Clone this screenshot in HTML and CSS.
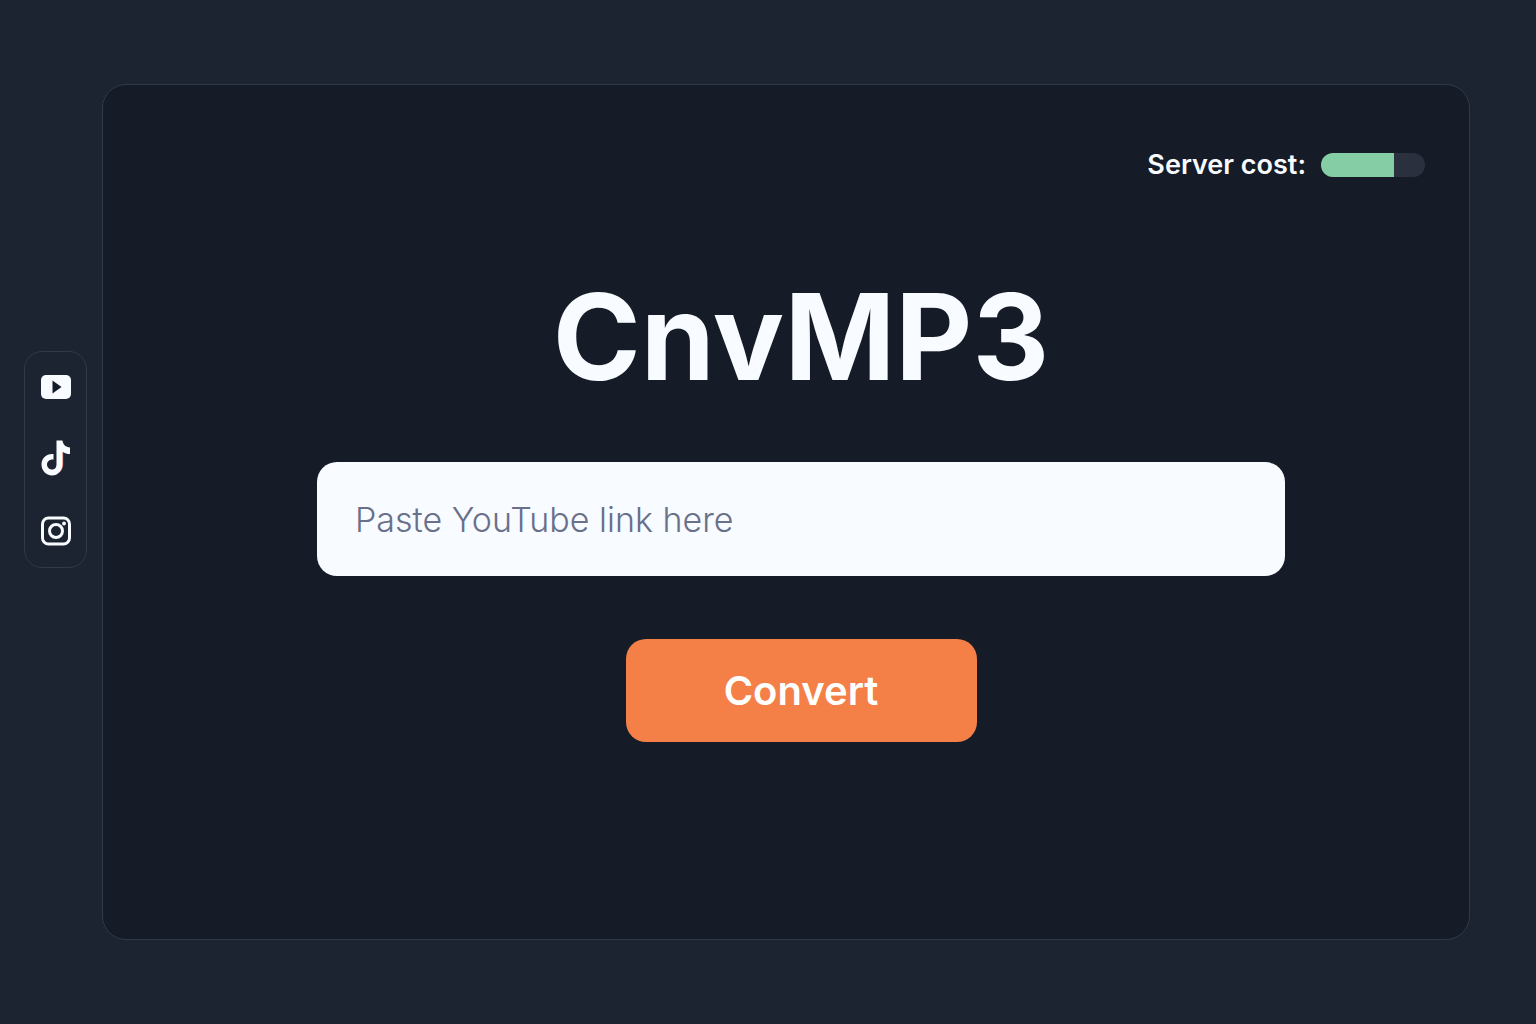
FILE: index.html
```html
<!DOCTYPE html>
<html lang="en">
<head>
    <meta charset="UTF-8">
    <meta name="viewport" content="width=device-width, initial-scale=1.0">
    <title>CnvMP3</title>
    <link rel="stylesheet" href="styles.css">
</head>

<body>

    <nav class="sidebar" aria-label="Platforms">
        <a href="#youtube" aria-label="YouTube">
            <svg class="icon" viewBox="0 0 36 36">
                <rect x="3" y="6" width="30" height="24" rx="5" fill="#f8fbff"/>
                <path d="M14.500 11.500v13l9-6.500z" fill="#151c28"/>
            </svg>
        </a>
        <a href="#tiktok" aria-label="TikTok">
            <svg class="icon" viewBox="0 0 36 36">
                <path d="M24 10h1.200v13.500c0 3-1.200 5.500-3.200 7.500z" fill="#d9643f"/>
                <path d="M18.500 -.5h6c.4 4.300 3.300 6.500 7.500 6.900v6.600c-2.800 0-5.300-.8-7.500-2.300v12.500C24.500 29.300 20 34.500 14 34.500S3.500 29.400 3.500 23.500 8.200 13 14 13l1.500.1v5.400c-3.300-.7-6.500 1.700-6.500 5 0 2.800 2.200 5 5 5 2.900 0 4.500-2.100 4.500-5.100z" fill="#f8fbff"/>
            </svg>
        </a>
        <a href="#instagram" aria-label="Instagram">
            <svg class="icon" viewBox="0 0 36 36" fill="none" stroke="#f8fbff" stroke-width="3">
                <rect x="4.500" y="5" width="27" height="26" rx="6"/>
                <circle cx="18" cy="18" r="6.500"/>
                <circle cx="26" cy="10.500" r="1.900" fill="#f8fbff" stroke="none"/>
            </svg>
        </a>
    </nav>

    <main class="panel">
        <div class="server-cost">
            <label for="serverCost">Server cost:</label>
            <progress id="serverCost" value="70" max="100"></progress>
        </div>

        <h1>CnvMP3</h1>

        <form class="convert-form">
            <input type="text" id="link" name="link" placeholder="Paste YouTube link here" aria-label="Paste YouTube link here">
            <button type="submit">Convert</button>
        </form>
    </main>

</body>
</html>
```

FILE: styles.css
```css
* {
    box-sizing: border-box;
}

body {
    font-family: Inter, 'Liberation Sans', sans-serif;
    background-color: #1d2431;
    color: #f8fbff;
    margin: 0;
    min-height: 100vh;
    padding: 84px 66px 84px 24px;
    display: flex;
    gap: 15px;
}

.sidebar {
    width: 63px;
    margin-top: 267px;
    padding: 17px 0 18px;
    border: 1px solid #323946;
    border-radius: 18px;
    display: flex;
    flex-direction: column;
    align-items: center;
    align-self: flex-start;
    gap: 36px;
}

.sidebar a {
    display: block;
    height: 36px;
}

.icon {
    display: block;
    width: 36px;
    height: 36px;
    overflow: visible;
}

.panel {
    flex: 1;
    padding: 60px 44px 60px 74px;
    background-color: #151c28;
    border: 1px solid #323946;
    border-radius: 24px;
    display: flex;
    flex-direction: column;
    align-items: center;
}

.server-cost {
    align-self: flex-end;
    display: flex;
    align-items: center;
    gap: 15px;
    font-size: 27px;
    font-weight: 600;
    line-height: 40px;
}

progress {
    appearance: none;
    width: 104px;
    height: 24px;
    border: none;
    border-radius: 12px;
    overflow: hidden;
}

progress::-webkit-progress-bar {
    background-color: #2a303d;
}

progress::-webkit-progress-value {
    background-color: #84cda5;
}

h1 {
    margin: 77px 0 50px;
    font-size: 119px;
    font-weight: 700;
    line-height: 150px;
}

.convert-form {
    width: 100%;
    max-width: 968px;
    display: flex;
    flex-direction: column;
    align-items: center;
    gap: 63px;
}

input {
    width: 100%;
    height: 114px;
    padding: 0 38px;
    background-color: #f8fbff;
    color: #151c28;
    border: none;
    border-radius: 20px;
    font-family: inherit;
    font-size: 34px;
    font-weight: 300;
}

input::placeholder {
    color: #68708a;
}

button {
    width: 351px;
    height: 103px;
    background-color: #f48047;
    color: #fff;
    border: none;
    border-radius: 20px;
    font-family: inherit;
    font-size: 40px;
    font-weight: 600;
    cursor: pointer;
}
```
